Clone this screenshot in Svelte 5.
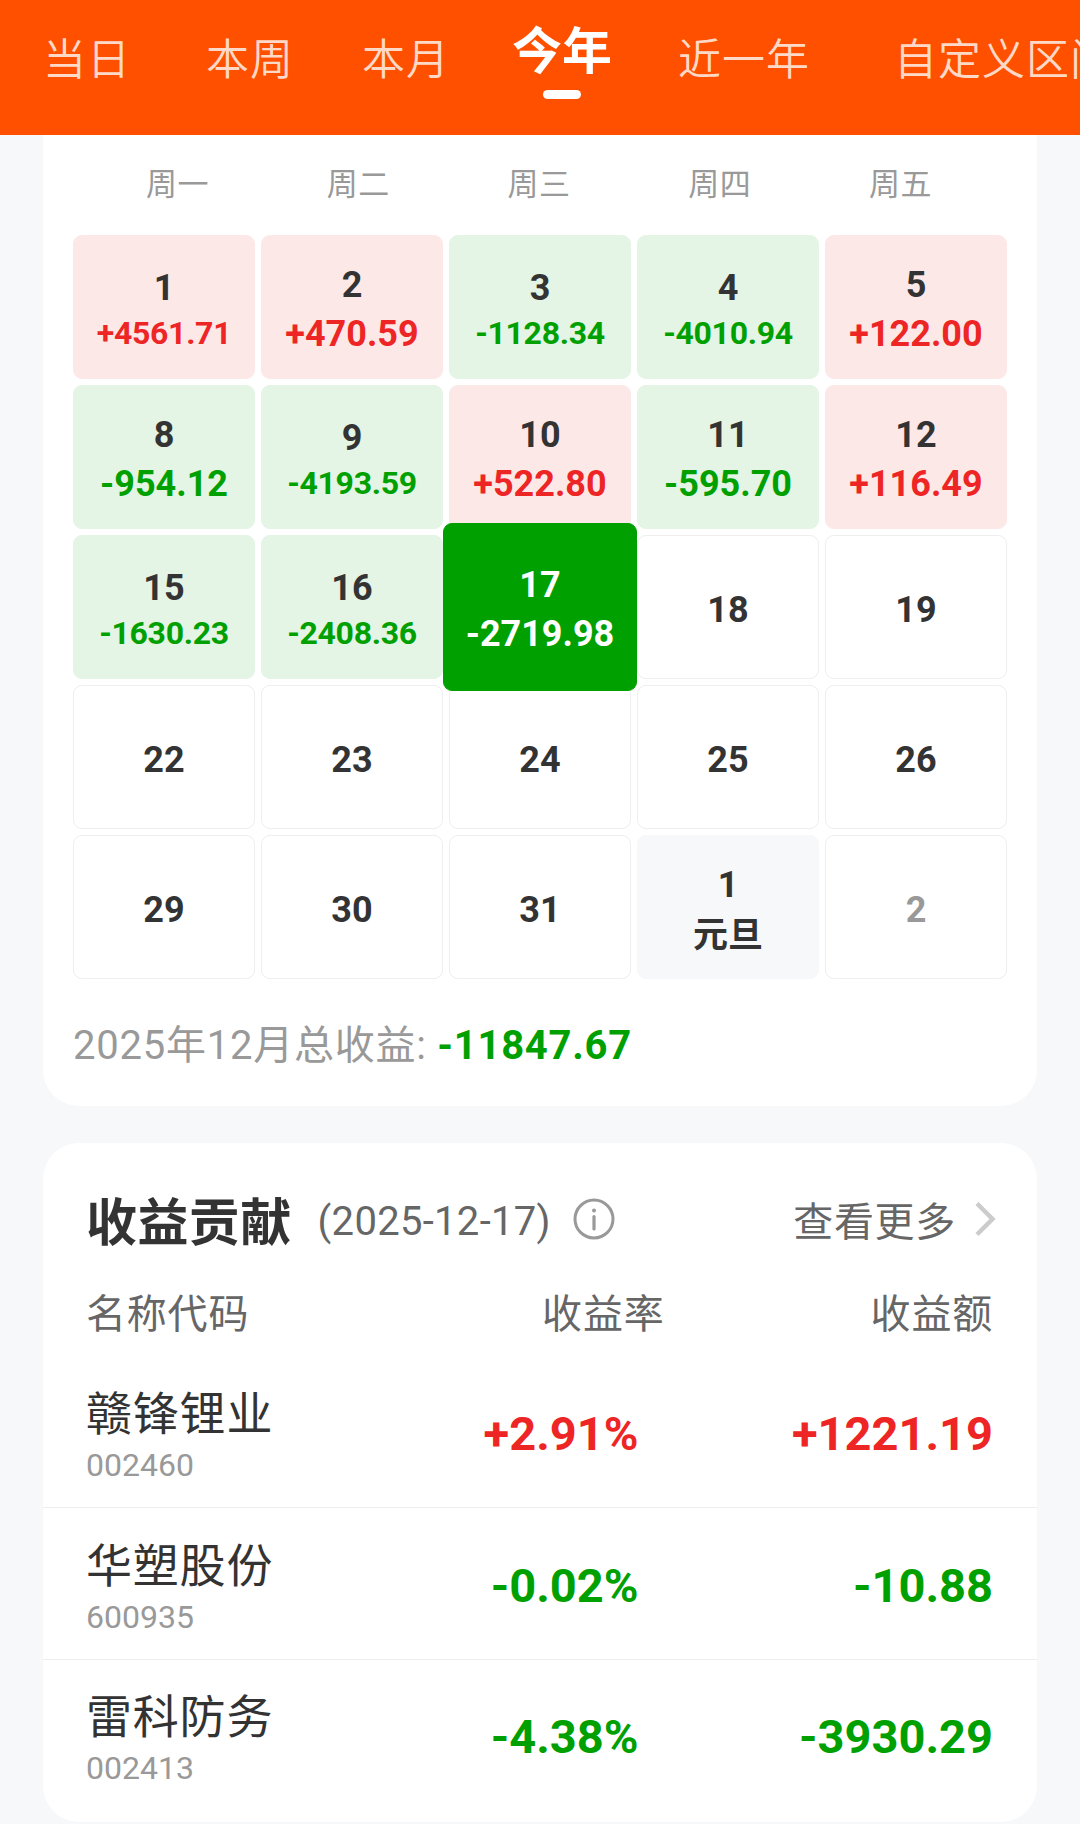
<script>
	const tabs = ["当日", "本周", "本月", "今年", "近一年", "自定义区间"];
	let activeTab = $state("今年");

	const weekdays = ["周一", "周二", "周三", "周四", "周五"];

	const days = [
		{ day: 1, amount: "+4561.71" },
		{ day: 2, amount: "+470.59" },
		{ day: 3, amount: "-1128.34" },
		{ day: 4, amount: "-4010.94" },
		{ day: 5, amount: "+122.00" },
		{ day: 8, amount: "-954.12" },
		{ day: 9, amount: "-4193.59" },
		{ day: 10, amount: "+522.80" },
		{ day: 11, amount: "-595.70" },
		{ day: 12, amount: "+116.49" },
		{ day: 15, amount: "-1630.23" },
		{ day: 16, amount: "-2408.36" },
		{ day: 17, amount: "-2719.98" },
		{ day: 18 },
		{ day: 19 },
		{ day: 22 },
		{ day: 23 },
		{ day: 24 },
		{ day: 25 },
		{ day: 26 },
		{ day: 29 },
		{ day: 30 },
		{ day: 31 },
		{ day: 1, holiday: "元旦" },
		{ day: 2, muted: true },
	];
	let selected = $state(12);

	const stocks = [
		{ name: "赣锋锂业", code: "002460", rate: "+2.91%", amount: "+1221.19" },
		{ name: "华塑股份", code: "600935", rate: "-0.02%", amount: "-10.88" },
		{ name: "雷科防务", code: "002413", rate: "-4.38%", amount: "-3930.29" },
	];

	function trend(value) {
		if (!value) return "";
		return value.startsWith("+") ? "up" : "down";
	}
</script>

<div class="page">
	<nav class="tabs">
		{#each tabs as tab}
			<button
				class="tab"
				class:active={tab === activeTab}
				onclick={() => (activeTab = tab)}
			>
				{tab}
			</button>
		{/each}
	</nav>

	<section class="card calendar">
		<div class="weekdays">
			{#each weekdays as weekday}
				<span>{weekday}</span>
			{/each}
		</div>
		<div class="grid">
			{#each days as item, i}
				<button
					class="cell {trend(item.amount)}"
					class:holiday={item.holiday}
					class:muted={item.muted}
					class:selected={i === selected}
					onclick={() => (selected = i)}
				>
					<span class="day">{item.day}</span>
					{#if item.amount}
						<span class="amount" class:small={item.amount.length > 7}>{item.amount}</span>
					{:else if item.holiday}
						<span class="festival">{item.holiday}</span>
					{/if}
				</button>
			{/each}
		</div>
		<p class="total">2025年12月总收益: <b>-11847.67</b></p>
	</section>

	<section class="card contribution">
		<header>
			<h2>收益贡献</h2>
			<span class="date">(2025-12-17)</span>
			<svg class="info" viewBox="0 0 42 42" fill="none" stroke="#999">
				<circle cx="21" cy="21" r="19" stroke-width="3" />
				<path d="M21 18.5V31" stroke-width="3.2" stroke-linecap="round" />
				<circle cx="21" cy="12.5" r="2" fill="#999" stroke="none" />
			</svg>
			<span class="more">查看更多</span>
			<svg class="chevron" viewBox="0 0 24 38" fill="none" stroke="#ccc" stroke-width="4.5">
				<path d="M3 3.5L18.5 19L3 34.5" />
			</svg>
		</header>
		<div class="row labels">
			<span>名称代码</span>
			<span class="rate">收益率</span>
			<span class="money">收益额</span>
		</div>
		{#each stocks as stock}
			<div class="row stock">
				<div class="name">
					<strong>{stock.name}</strong>
					<small>{stock.code}</small>
				</div>
				<span class="rate {trend(stock.rate)}">{stock.rate}</span>
				<span class="money {trend(stock.amount)}">{stock.amount}</span>
			</div>
		{/each}
	</section>
</div>

<style>
	:global(body) {
		background: #f7f8fa;
	}
	.page {
		width: 1080px;
		height: 1824px;
		overflow: hidden;
		background: #f7f8fa;
		color: #333;
		font-family: Roboto, "Noto Sans CJK SC", sans-serif;
	}
	button {
		padding: 0;
		border: 0;
		background: none;
		color: inherit;
		font: inherit;
	}
	.tabs {
		display: flex;
		height: 135px;
		box-sizing: border-box;
		padding-left: 43px;
		background: #ff5000;
		overflow: hidden;
	}
	.tab {
		flex: none;
		height: 121px;
		margin-right: 75px;
		color: #ffd9c7;
		font-size: 43px;
		font-weight: 350;
		letter-spacing: 1px;
		line-height: 121px;
		white-space: nowrap;
	}
	.tab:nth-child(2) {
		margin-right: 68px;
	}
	.tab:nth-child(3) {
		margin-right: 62px;
	}
	.tab:nth-child(4) {
		margin-right: 66px;
	}
	.tab:nth-child(5) {
		margin-right: 84px;
	}
	.tab.active {
		display: flex;
		flex-direction: column;
		align-items: center;
		color: #fff;
		font-size: 50px;
		font-weight: 700;
		letter-spacing: 0;
		line-height: 104px;
	}
	.tab.active::after {
		content: "";
		width: 38px;
		height: 9px;
		margin-top: -14px;
		border-radius: 5px;
		background: #fff;
	}
	.card {
		width: 994px;
		box-sizing: border-box;
		margin: 0 auto;
		background: #fff;
	}
	.calendar {
		height: 971px;
		padding: 0 30px;
		border-radius: 0 0 36px 36px;
	}
	.weekdays {
		display: flex;
		height: 100px;
		padding: 0 16px 0 14px;
		color: #999;
		font-size: 31px;
		letter-spacing: 0.5px;
		line-height: 100px;
		text-align: center;
	}
	.weekdays span {
		flex: 1;
	}
	.grid {
		display: grid;
		grid-template-columns: repeat(5, 182px);
		grid-auto-rows: 144px;
		gap: 6px;
	}
	.cell {
		display: flex;
		flex-direction: column;
		align-items: center;
		justify-content: center;
		box-sizing: border-box;
		padding-top: 6px;
		border: 1px solid #eee;
		border-radius: 9px;
		font-size: 36px;
		font-weight: 700;
		line-height: 49px;
	}
	.cell.up {
		border-color: #fde8e8;
		background: #fde8e8;
	}
	.cell.down {
		border-color: #e4f4e5;
		background: #e4f4e5;
	}
	.cell.holiday {
		border-color: #f7f8fa;
		background: #f7f8fa;
	}
	.cell.muted {
		color: #999;
	}
	.up .amount,
	.rate.up,
	.money.up {
		color: #ee2525;
	}
	.down .amount,
	.rate.down,
	.money.down,
	.total b {
		color: #00a000;
	}
	.amount.small {
		margin: -1px 0 3px;
		font-size: 32px;
		letter-spacing: -0.3px;
		line-height: 42px;
	}
	.festival {
		padding-top: 2px;
		font-size: 35px;
		line-height: 48px;
	}
	/* the selected day grows over its neighbours */
	.cell.selected {
		z-index: 1;
		margin: -12px -6px;
		border-color: #00a000;
		background: #00a000;
		color: #fff;
	}
	.selected .amount {
		margin: 0;
		color: #fff;
		font-size: 36px;
		letter-spacing: 0;
		line-height: 49px;
	}
	.total {
		margin: 37px 0 0;
		color: #999;
		font-size: 40px;
		letter-spacing: 0.75px;
		line-height: 60px;
		white-space: nowrap;
	}
	.contribution {
		height: 679px;
		margin-top: 37px;
		border-radius: 36px;
	}
	header {
		display: flex;
		align-items: center;
		height: 122px;
		padding: 30px 39px 0 43px;
		box-sizing: border-box;
	}
	h2 {
		margin: 0;
		padding-top: 9px;
		font-size: 51px;
		font-weight: 700;
		letter-spacing: 0.4px;
		line-height: 60px;
	}
	.date {
		margin-left: 26px;
		padding-top: 4px;
		color: #666;
		font-size: 40px;
		letter-spacing: 0.3px;
	}
	.info {
		width: 42px;
		height: 42px;
		margin-left: 22px;
	}
	.more {
		margin-left: auto;
		color: #666;
		font-size: 40px;
		letter-spacing: 0.7px;
	}
	.chevron {
		width: 24px;
		height: 38px;
		margin-left: 18px;
	}
	.row {
		display: grid;
		grid-template-columns: 300px 1fr 1fr;
		padding: 0 44px 0 43px;
	}
	.labels {
		height: 91px;
		color: #666;
		font-size: 40px;
		letter-spacing: 0.8px;
		line-height: 99px;
	}
	.rate,
	.money {
		text-align: right;
	}
	.labels .rate {
		padding-right: 25px;
	}
	.stock {
		height: 152px;
		box-sizing: border-box;
		border-bottom: 1px solid #eee;
		font-size: 47px;
		font-weight: 700;
		line-height: 156px;
	}
	.stock .rate {
		padding-right: 51px;
	}
	.stock:last-child {
		border-bottom: 0;
		line-height: 154px;
	}
	.name {
		display: flex;
		flex-direction: column;
		padding-top: 28px;
	}
	.stock:last-child .name {
		padding-top: 27px;
	}
	strong {
		font-size: 46px;
		font-weight: 400;
		letter-spacing: 0.8px;
		line-height: 60px;
	}
	small {
		margin-top: 2px;
		color: #999;
		font-size: 32px;
		font-weight: 400;
		line-height: 39px;
	}
</style>
